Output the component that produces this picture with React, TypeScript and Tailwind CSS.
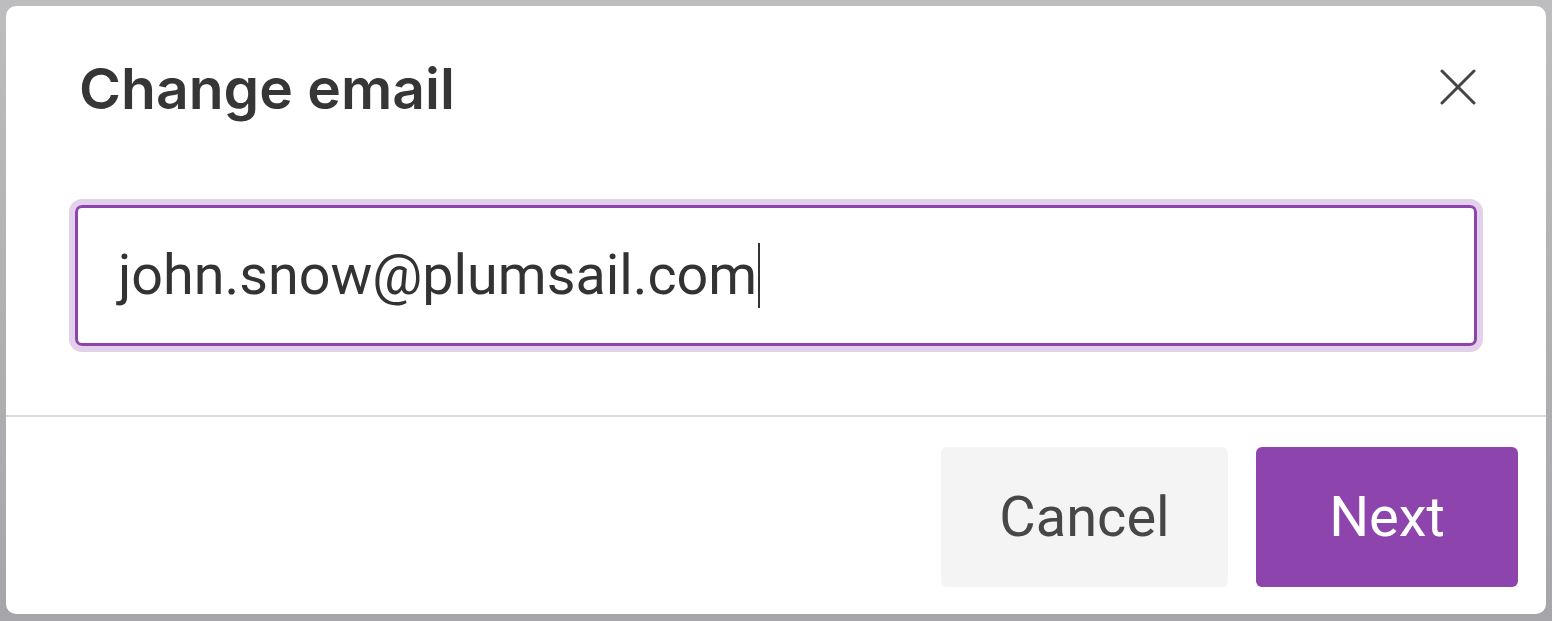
import React from "react";

const CloseIcon: React.FC = () => (
  <svg width="36" height="36" viewBox="0 0 36 36" fill="none" stroke="#444444" strokeWidth="3" strokeLinecap="round">
    <path d="M2 2 34 34" />
    <path d="M34 2 2 34" />
  </svg>
);

const App: React.FC = () => {
  return (
    <div className="h-[621px] w-[1552px] bg-gradient-to-b from-[#bdbdbf] to-[#a6a6aa] pt-[6px] pl-[6px]">
      <div className="flex h-[608px] w-[1540px] flex-col rounded-[10px] bg-white">
        {/* Header + body */}
        <div className="px-[69px] pt-[54px] pb-[69px]">
          <div className="flex items-start justify-between pl-[4px] pr-[1px]">
            <h2 className="font-['Inter',sans-serif] text-[57px] font-semibold leading-none text-[#363636]">
              Change email
            </h2>
            <button className="mt-[9px]">
              <CloseIcon />
            </button>
          </div>

          <div className="mt-[88px] flex h-[141px] w-[1402px] items-center rounded-[7px] border-[3px] border-[#8e44ad] pl-[40px] shadow-[0_0_0_6px_#e3d0ea]">
            <span className="font-['Roboto',sans-serif] text-[55.7px] leading-none text-[#333333]">
              john.snow@plumsail.com
            </span>
            <span className="ml-[1px] h-[65px] w-[2px] bg-[#333333]" />
          </div>
        </div>

        {/* Footer */}
        <div className="flex justify-end gap-[28px] border-t-2 border-[#dcdcdc] pt-[30px] pr-[28px]">
          <button className="flex h-[140px] w-[287px] items-center justify-center rounded-[6px] bg-[#f4f4f4] font-['Roboto',sans-serif] text-[56px] text-[#474747]">
            Cancel
          </button>
          <button className="flex h-[140px] w-[262px] items-center justify-center rounded-[6px] bg-[#8e44ad] font-['Roboto',sans-serif] text-[56px] text-white">
            Next
          </button>
        </div>
      </div>
    </div>
  );
};

export default App;
